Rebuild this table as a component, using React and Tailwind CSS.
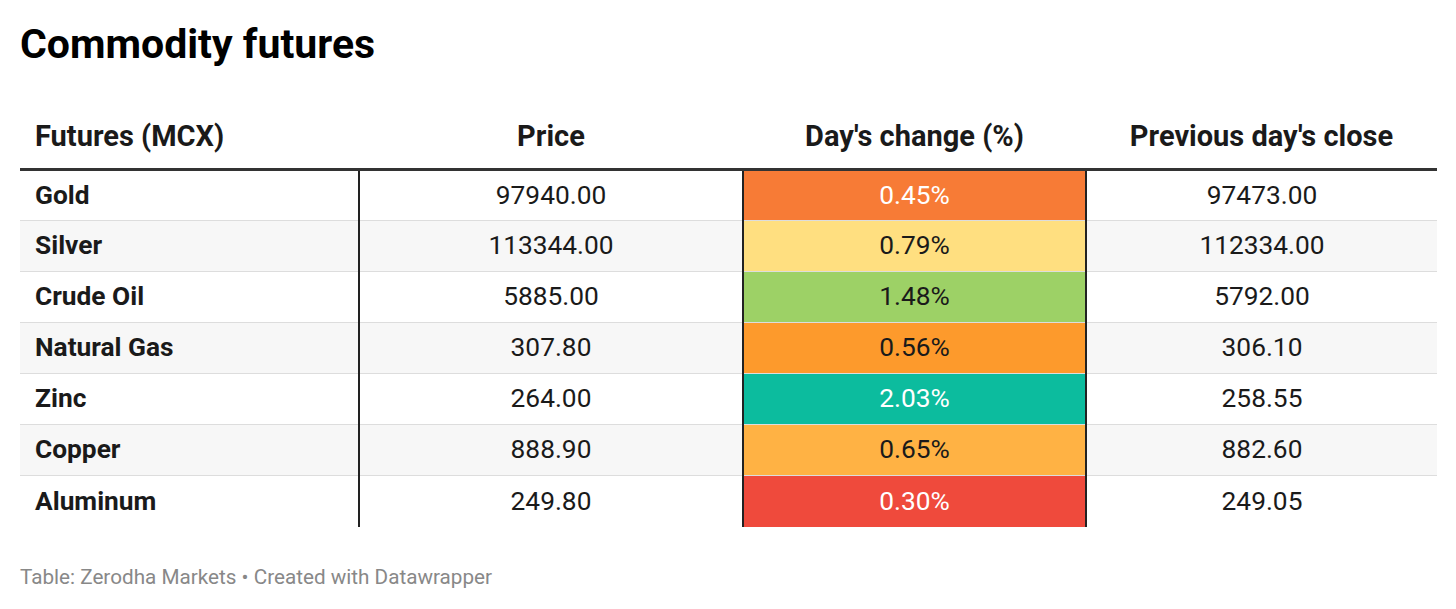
import React from 'react';

const rows = [
  { name: 'Gold', price: '97940.00', change: '0.45%', prev: '97473.00', bg: 'bg-[#f77b36]', fg: 'text-white' },
  { name: 'Silver', price: '113344.00', change: '0.79%', prev: '112334.00', bg: 'bg-[#ffdf80]', fg: 'text-[#1a1a1a]' },
  { name: 'Crude Oil', price: '5885.00', change: '1.48%', prev: '5792.00', bg: 'bg-[#9dd166]', fg: 'text-[#1a1a1a]' },
  { name: 'Natural Gas', price: '307.80', change: '0.56%', prev: '306.10', bg: 'bg-[#fd9a2c]', fg: 'text-[#1a1a1a]' },
  { name: 'Zinc', price: '264.00', change: '2.03%', prev: '258.55', bg: 'bg-[#0cbc9e]', fg: 'text-white' },
  { name: 'Copper', price: '888.90', change: '0.65%', prev: '882.60', bg: 'bg-[#ffb244]', fg: 'text-[#1a1a1a]' },
  { name: 'Aluminum', price: '249.80', change: '0.30%', prev: '249.05', bg: 'bg-[#ef4a3c]', fg: 'text-white' },
];

const App = () => {
  return (
    <div className="w-[1456px] h-[609px] bg-white px-5 pt-[20px] font-['Roboto',sans-serif] text-[#1a1a1a]">
      <h1 className="text-[41px] font-bold leading-[48px] text-black">Commodity futures</h1>

      <table className="mt-[51px] w-[1417px] border-collapse text-[26.3px]">
        <thead>
          <tr className="border-b-[3px] border-[#333] text-[29px] leading-[34px]">
            <th className="w-[339px] pl-[15px] pb-[15px] text-left font-bold">Futures (MCX)</th>
            <th className="w-[384px] pb-[15px] text-center font-bold">Price</th>
            <th className="w-[343px] pb-[15px] text-center font-bold">Day's change (%)</th>
            <th className="w-[351px] pb-[15px] text-center font-bold">Previous day's close</th>
          </tr>
        </thead>
        <tbody>
          {rows.map((r, i) => (
            <tr
              key={r.name}
              className={`h-[51px] ${i > 0 ? 'border-t border-[#ddd]' : ''} ${i % 2 === 1 ? 'bg-[#f7f7f7]' : 'bg-white'}`}
            >
              <td className="pl-[15px] font-bold">{r.name}</td>
              <td className="border-l-2 border-l-[#222] text-center">{r.price}</td>
              <td className={`border-x-2 border-x-[#222] text-center ${r.bg} ${r.fg}`}>{r.change}</td>
              <td className="text-center">{r.prev}</td>
            </tr>
          ))}
        </tbody>
      </table>

      <p className="mt-[36px] text-[20.7px] leading-[28px] text-[#888]">Table: Zerodha Markets • Created with Datawrapper</p>
    </div>
  );
};

export default App;
